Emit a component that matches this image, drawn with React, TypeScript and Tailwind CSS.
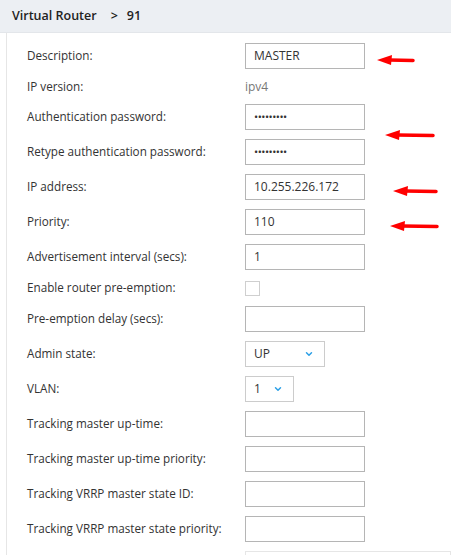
import { ChevronDown } from "lucide-react";

type Row =
  | { label: string; kind: "input"; value?: string; password?: boolean }
  | { label: string; kind: "text"; value: string }
  | { label: string; kind: "checkbox" }
  | { label: string; kind: "select"; value: string; width: string };

const rows: Row[] = [
  { label: "Description:", kind: "input", value: "MASTER" },
  { label: "IP version:", kind: "text", value: "ipv4" },
  { label: "Authentication password:", kind: "input", value: "•••••••••", password: true },
  { label: "Retype authentication password:", kind: "input", value: "•••••••••", password: true },
  { label: "IP address:", kind: "input", value: "10.255.226.172" },
  { label: "Priority:", kind: "input", value: "110" },
  { label: "Advertisement interval (secs):", kind: "input", value: "1" },
  { label: "Enable router pre-emption:", kind: "checkbox" },
  { label: "Pre-emption delay (secs):", kind: "input" },
  { label: "Admin state:", kind: "select", value: "UP", width: "w-[80px]" },
  { label: "VLAN:", kind: "select", value: "1", width: "w-[49px]" },
  { label: "Tracking master up-time:", kind: "input" },
  { label: "Tracking master up-time priority:", kind: "input" },
  { label: "Tracking VRRP master state ID:", kind: "input" },
  { label: "Tracking VRRP master state priority:", kind: "input" },
];

const Arrow = ({ x, y, w }: { x: number; y: number; w: number }) => (
  <svg
    className="absolute"
    style={{ left: x, top: y - 6 }}
    width={w}
    height={12}
    viewBox={`0 0 ${w} 12`}
  >
    <line x1={12} y1={6} x2={w - 2} y2={6.5} stroke="#ff0000" strokeWidth={3.5} strokeLinecap="round" />
    <polygon points="0,6 15,1 14,11" fill="#ff0000" />
  </svg>
);

const Field = ({ row }: { row: Row }) => {
  if (row.kind === "text") {
    return <span className="text-[12px] text-[#777]">{row.value}</span>;
  }
  if (row.kind === "checkbox") {
    return <div className="w-[15px] h-[15px] border border-[#cfcfcf] bg-white" />;
  }
  if (row.kind === "select") {
    return (
      <div
        className={`${row.width} h-[26px] border border-[#cccccc] flex items-center justify-between pl-[8px] pr-[10px] text-[12px] text-[#333]`}
      >
        <span>{row.value}</span>
        <ChevronDown className="w-[10px] h-[10px] text-[#2b9fe6]" strokeWidth={3.5} />
      </div>
    );
  }
  return (
    <div className="w-[120px] h-[26px] border border-[#b5b5b5] flex items-center pl-[8px] text-[12px] text-[#333]">
      <span className={row.password ? "tracking-[-0.5px] text-[11px]" : ""}>{row.value ?? ""}</span>
    </div>
  );
};

export default function App() {
  return (
    <div
      className="relative w-[451px] h-[555px] overflow-hidden bg-white"
      style={{ fontFamily: '"Open Sans", "Noto Sans", sans-serif' }}
    >
      <div className="h-[33px] bg-[#eceff3] border-b border-[#e3e6ea] flex items-center pl-[12px] text-[12.5px] font-semibold text-[#222]">
        <span>Virtual Router</span>
        <span className="ml-[14px]">&gt;</span>
        <span className="ml-[9px]">91</span>
      </div>
      <div className="ml-[6px] border-l border-[#e6e6e6] h-full pt-[10px] pl-[20px]">
        <div className="flex flex-col gap-[9px]">
          {rows.map((row) => (
            <div
              key={row.label}
              className={`flex items-center ${row.kind === "text" ? "h-[17px]" : row.kind === "checkbox" ? "h-[18px]" : "h-[26px]"}`}
            >
              <div className="w-[218px] text-[11.7px] text-[#333]">{row.label}</div>
              <Field row={row} />
            </div>
          ))}
          <div className="flex">
            <div className="w-[218px]" />
            <div className="flex-1 h-[20px] border border-[#e6e6e6]" />
          </div>
        </div>
      </div>
      <Arrow x={377} y={60} w={38} />
      <Arrow x={385} y={135} w={50} />
      <Arrow x={393} y={191} w={45} />
      <Arrow x={390} y={226} w={49} />
    </div>
  );
}
